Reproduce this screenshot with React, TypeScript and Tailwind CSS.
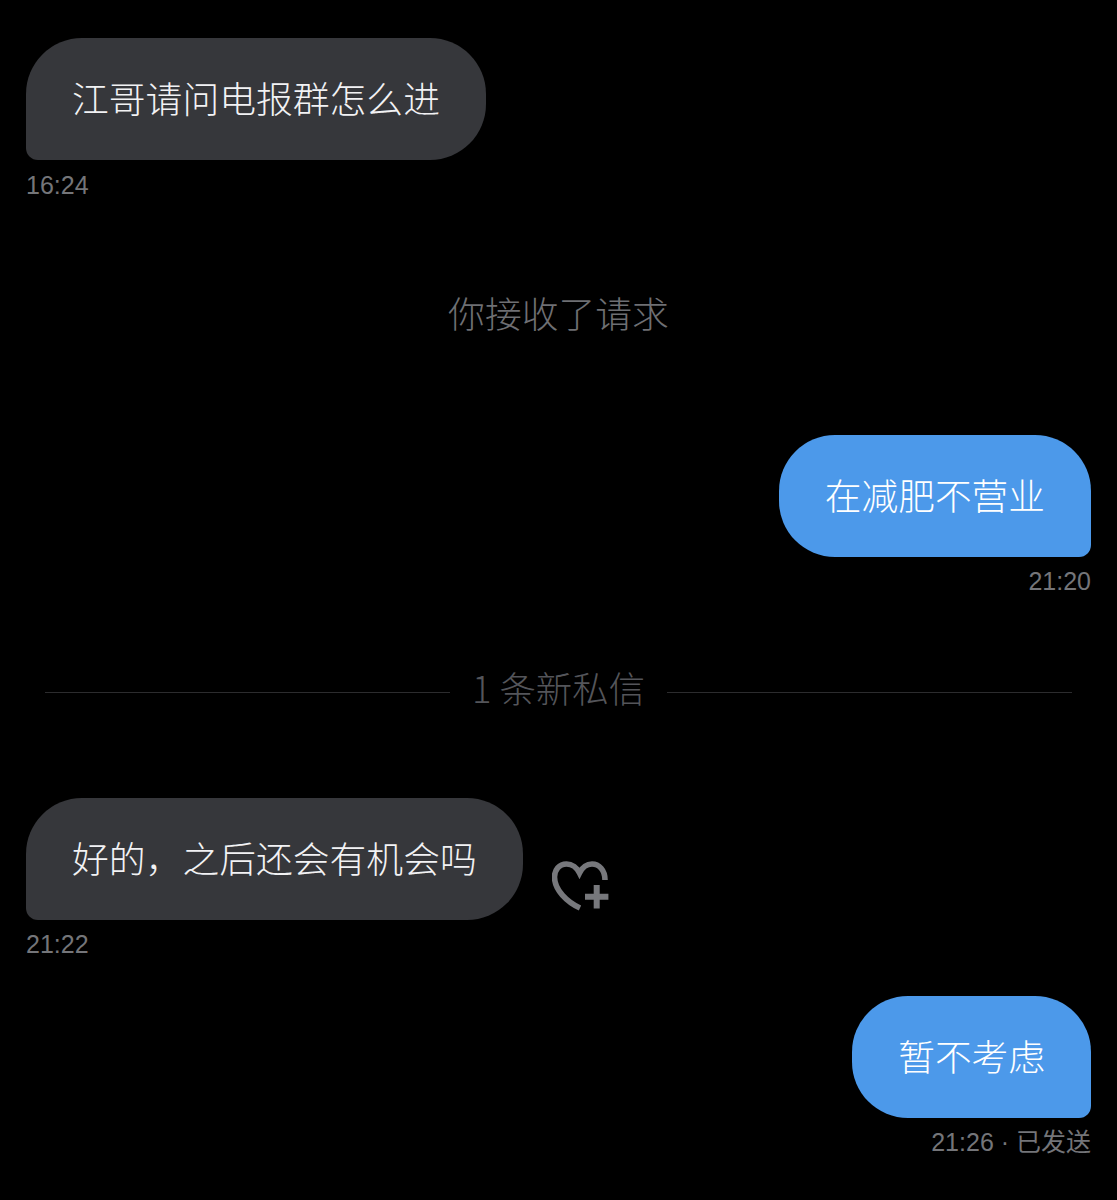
const cjk = "font-['Noto_Sans_CJK_SC',sans-serif]";
const time = "text-[25px] leading-[30px] text-[#747579] font-['Liberation_Sans','Noto_Sans_CJK_SC',sans-serif]";

function Bubble({ text, mine }: { text: string; mine?: boolean }) {
  return (
    <div
      className={
        mine
          ? "rounded-[56px] rounded-br-[12px] bg-[#4c99ea] px-[46px] pt-[34px] pb-[38px] text-[36.7px] leading-[50px] font-light text-white"
          : "rounded-[56px] rounded-bl-[12px] bg-[#36373b] px-[46px] pt-[34px] pb-[38px] text-[36.8px] leading-[50px] font-light text-[#f2f2f4]"
      }
    >
      {text}
    </div>
  );
}

function HeartPlus() {
  return (
    <svg width="60" height="52" viewBox="0 0 60 52" fill="none" stroke="#77787c" strokeWidth="5.6">
      <path d="M53 20C53 10 47 4 40 4C34 4 30 8 27.5 13C25 8 20 4 14.5 4C7 4 2.5 10 2.5 17C2.5 30 15 42 28 48" />
      <path d="M33 36.7H56.4M44.7 25V48.4" strokeWidth="6" />
    </svg>
  );
}

export default function App() {
  return (
    <div className={`h-[1200px] overflow-hidden bg-black pt-[38px] px-[26px] ${cjk}`}>
      <div className="flex">
        <Bubble text="江哥请问电报群怎么进" />
      </div>
      <div className={`mt-[10px] ${time}`}>16:24</div>

      <div className="mt-[87px] pb-[2px] text-center text-[36.8px] leading-[50px] font-light text-[#6e6f73]">你接收了请求</div>

      <div className="mt-[96px] flex justify-end">
        <Bubble text="在减肥不营业" mine />
      </div>
      <div className={`mt-[9px] text-right ${time}`}>21:20</div>

      <div className="mt-[69px] flex h-[50px] items-center gap-[22px] px-[19px]">
        <div className="mt-[4px] h-px flex-1 bg-[#2c2c2e]" />
        <div className="pb-[6px] text-[36.4px] leading-[44px] font-light text-[#54555a]">1 条新私信</div>
        <div className="mt-[4px] h-px flex-1 bg-[#2c2c2e]" />
      </div>

      <div className="mt-[83px] flex items-end">
        <Bubble text="好的，之后还会有机会吗" />
        <div className="mb-[8px] ml-[29px]">
          <HeartPlus />
        </div>
      </div>
      <div className={`mt-[9px] ${time}`}>21:22</div>

      <div className="mt-[37px] flex justify-end">
        <Bubble text="暂不考虑" mine />
      </div>
      <div className={`mt-[9px] text-right ${time}`}>21:26 · 已发送</div>
    </div>
  );
}
